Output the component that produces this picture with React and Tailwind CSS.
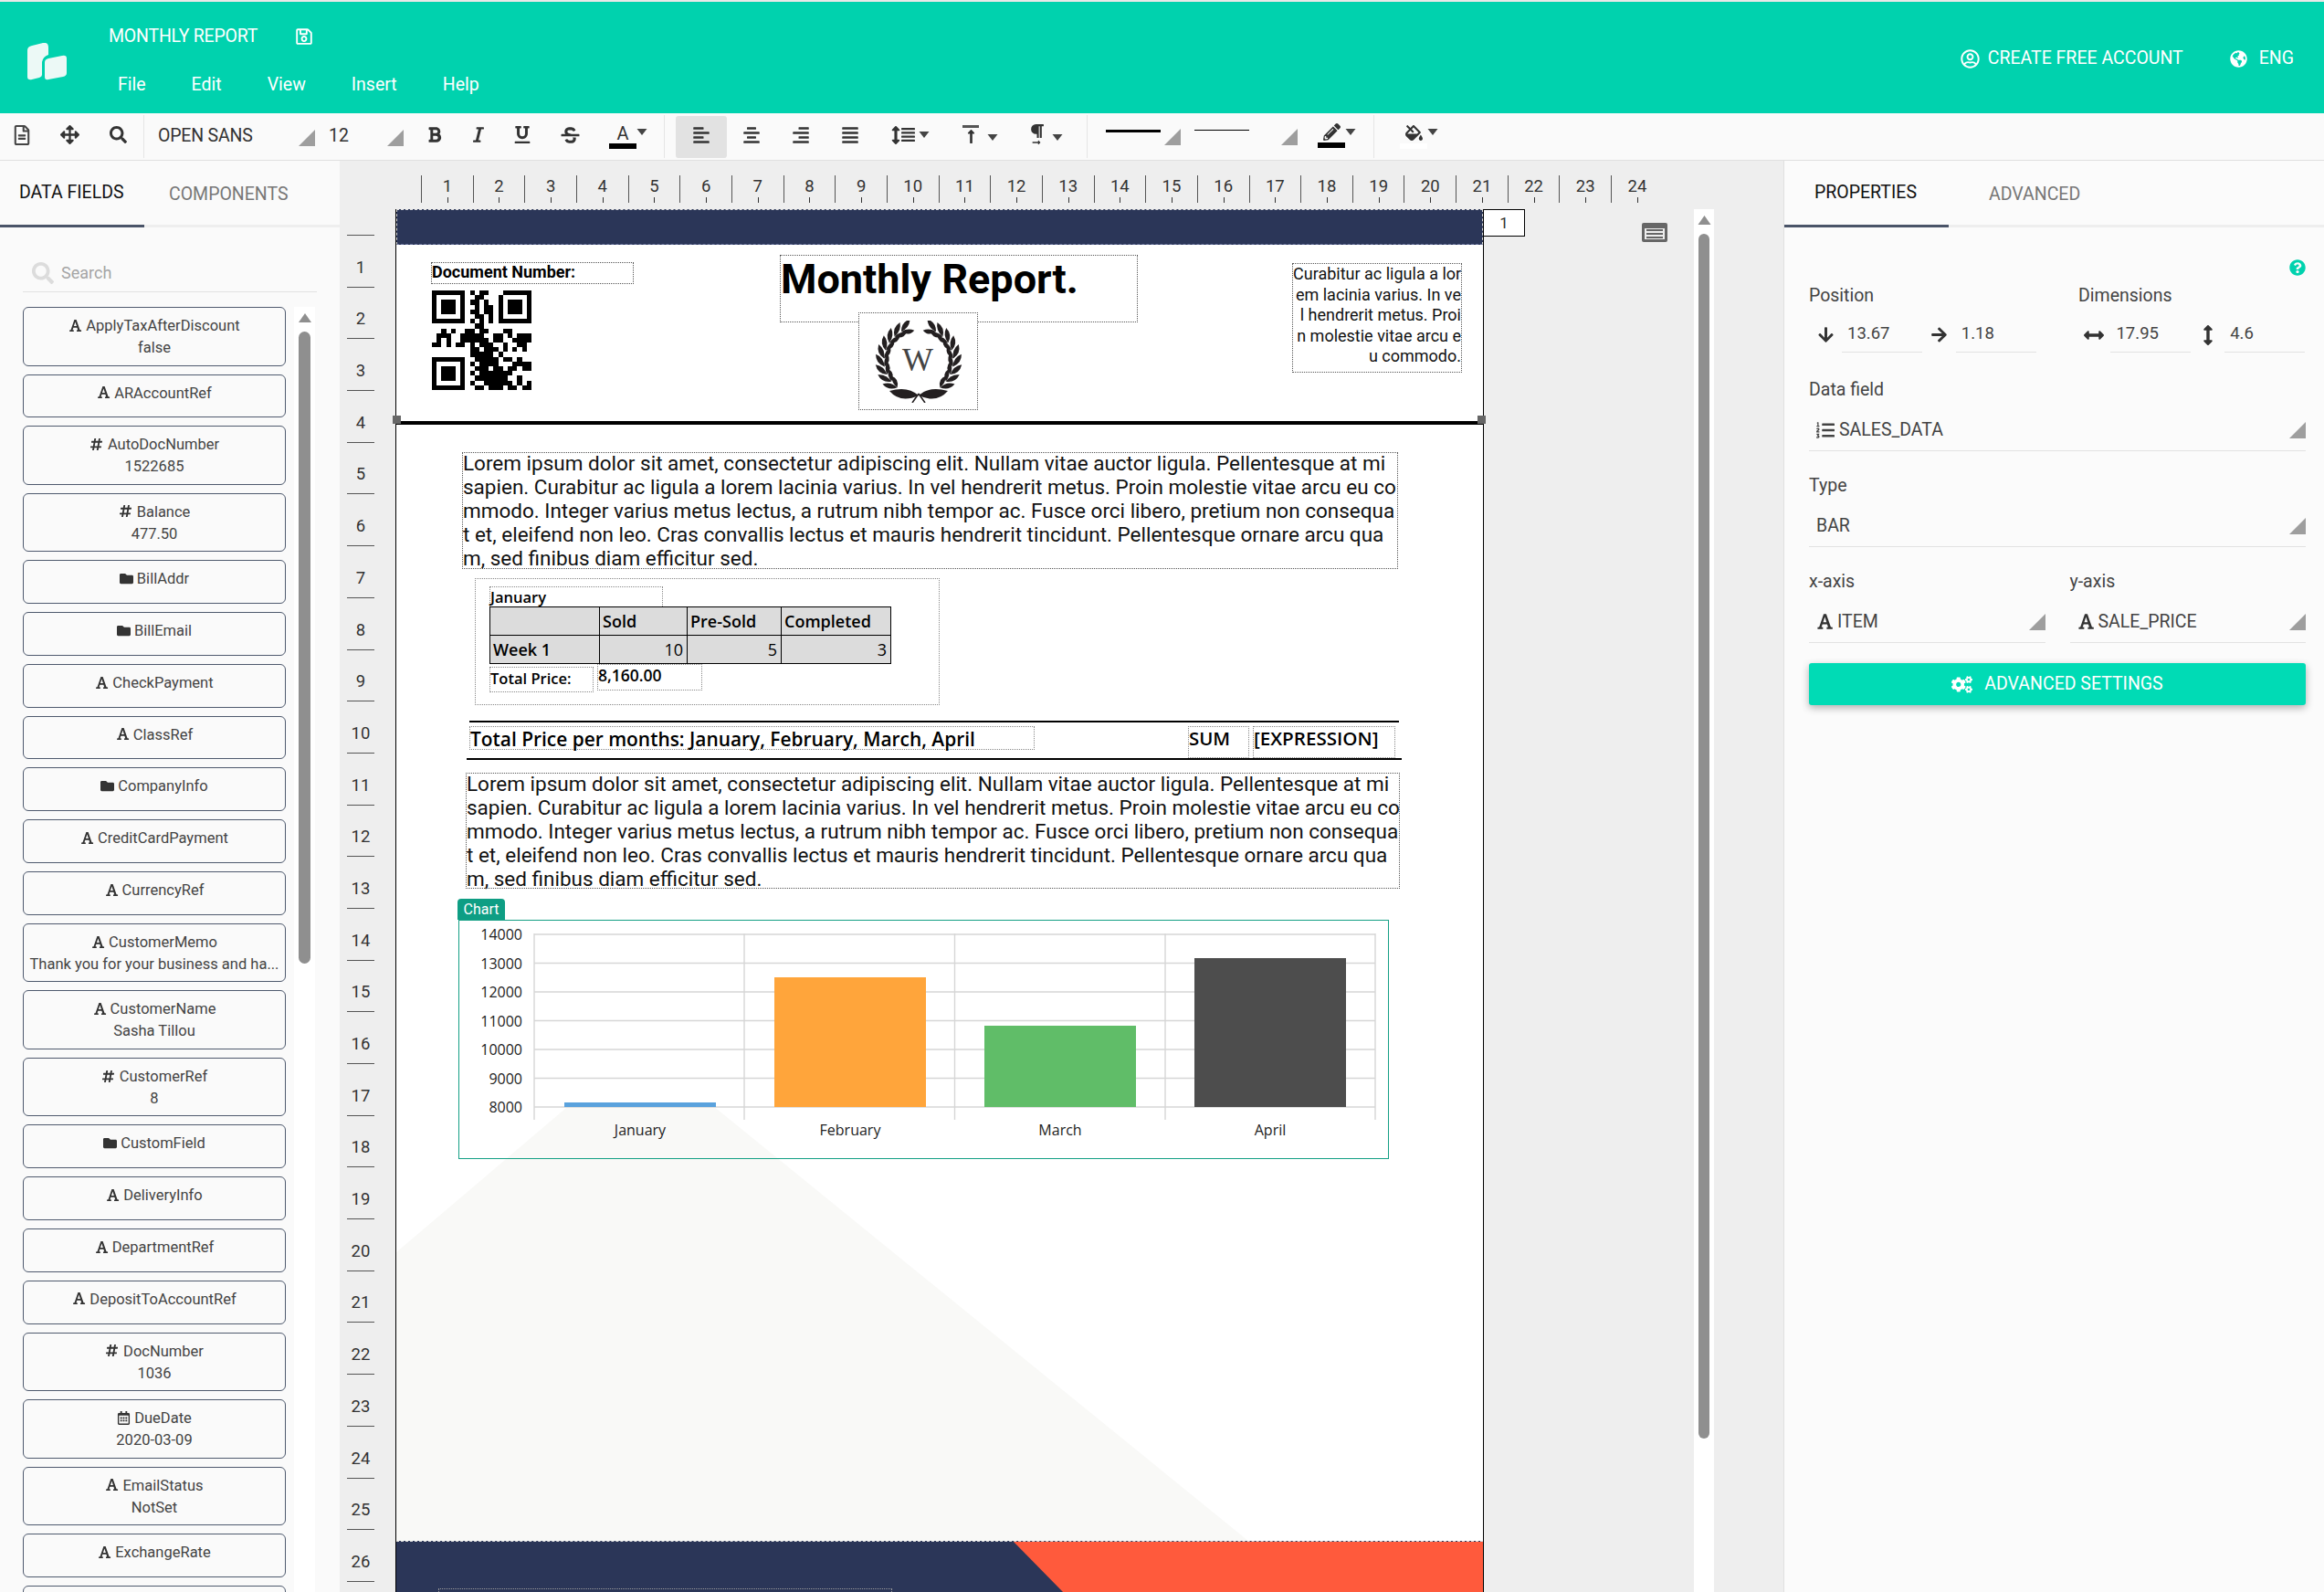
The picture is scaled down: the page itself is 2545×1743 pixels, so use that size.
import React from 'react';
import {
    FaRegFileAlt, FaArrowsAlt, FaSearch, FaBold, FaItalic, FaUnderline, FaStrikethrough,
    FaAlignLeft, FaAlignCenter, FaAlignRight, FaAlignJustify, FaHashtag, FaFolder,
    FaRegCalendarAlt, FaCogs, FaListOl, FaArrowDown, FaArrowRight, FaArrowsAltH, FaArrowsAltV,
    FaQuestionCircle, FaGlobeAmericas, FaRegSave, FaRegUserCircle, FaPencilAlt, FaFillDrip, FaParagraph,
    FaLongArrowAltUp, FaLongArrowAltRight,
} from 'react-icons/fa';

const fields = [
    ['font', 'ApplyTaxAfterDiscount', 'false'],
    ['font', 'ARAccountRef'],
    ['hash', 'AutoDocNumber', '1522685'],
    ['hash', 'Balance', '477.50'],
    ['folder', 'BillAddr'],
    ['folder', 'BillEmail'],
    ['font', 'CheckPayment'],
    ['font', 'ClassRef'],
    ['folder', 'CompanyInfo'],
    ['font', 'CreditCardPayment'],
    ['font', 'CurrencyRef'],
    ['font', 'CustomerMemo', 'Thank you for your business and ha...'],
    ['font', 'CustomerName', 'Sasha Tillou'],
    ['hash', 'CustomerRef', '8'],
    ['folder', 'CustomField'],
    ['font', 'DeliveryInfo'],
    ['font', 'DepartmentRef'],
    ['font', 'DepositToAccountRef'],
    ['hash', 'DocNumber', '1036'],
    ['date', 'DueDate', '2020-03-09'],
    ['font', 'EmailStatus', 'NotSet'],
    ['font', 'ExchangeRate'],
];

function FontGlyph({ className }) {
    return (
        <svg viewBox="0 0 16 16" className={className}>
            <path
                fillRule="evenodd"
                fill="#333"
                d="M6.8 1h2.4l4.2 12 1.6.3V15H9.6v-1.7l1.3-.2-.9-2.6H5.7l-.9 2.6 1.4.2V15H1.2v-1.7l1.5-.3z M6.3 8.6h3.2L7.9 3.8z"
            />
        </svg>
    );
}

const fieldIcons = {
    font: <FontGlyph className="inline-block size-[15px] mr-[4px] -mt-[3px]" />,
    hash: <FaHashtag className="inline-block size-[15px] mr-[5px] -mt-[3px] text-[#333]" />,
    folder: <FaFolder className="inline-block size-[15px] mr-[4px] -mt-[3px] text-[#333]" />,
    date: <FaRegCalendarAlt className="inline-block size-[15px] mr-[4px] -mt-[3px] text-[#333]" />,
};

const rulerNumbers = Array.from({ length: 24 }, (_, i) => i + 1);
const pageNumbers = Array.from({ length: 26 }, (_, i) => i + 1);

const lorem = [
    'Lorem ipsum dolor sit amet, consectetur adipiscing elit. Nullam vitae auctor ligula. Pellentesque at mi',
    'sapien. Curabitur ac ligula a lorem lacinia varius. In vel hendrerit metus. Proin molestie vitae arcu eu co',
    'mmodo. Integer varius metus lectus, a rutrum nibh tempor ac. Fusce orci libero, pretium non consequa',
    't et, eleifend non leo. Cras convallis lectus et mauris hendrerit tincidunt. Pellentesque ornare arcu qua',
    'm, sed finibus diam efficitur sed.',
];

const qrRows = [
    '111111101011000111111',
    '100000100110001000001',
    '101110101101001011101',
    '101110100101101011101',
    '101110101101101011101',
    '100000100110101000001',
    '111111101010101111111',
    '000000000110000000000',
    '001010011011000110000',
    '011100111110011010111',
    '010100111111011001111',
    '110101101011100100110',
    '000000001101110101010',
    '000000001111101000000',
    '111111100111110110100',
    '100000101011110001111',
    '101110100111011011011',
    '101110101011111110000',
    '101110100111111100100',
    '100000101001111110101',
    '111111100110111011011',
];

function Tri({ className }) {
    return (
        <svg viewBox="0 0 18 18" className={className}>
            <polygon points="18,0 18,18 0,18" fill="#9e9e9e" />
        </svg>
    );
}

function Caret({ className }) {
    return (
        <svg viewBox="0 0 11 7" className={`w-[12px] h-[7px] shrink-0 ${className}`}>
            <polygon points="0,0 11,0 5.5,7" fill="#444" />
        </svg>
    );
}

function Logo() {
    return (
        <svg viewBox="0 0 44 41" className="w-[44px] h-[41px] ml-[30px] mt-[45px] shrink-0">
            <path d="M0 8 Q0 4 5 3 L17 0 Q23 -1 23 5 L23 13 Q17 15 16 21 L16 35 Q16 37 13 38 L5 40 Q0 41 0 37 Z" fill="#ecf9f6" />
            <path d="M19 21 Q19 18 23 17 L38 14 Q43 13 43 17 L43 33 Q43 36 39 37 L23 40 Q19 41 19 37 Z" fill="#ecf9f6" />
        </svg>
    );
}

function Header() {
    return (
        <div className="h-[122px] bg-[#00d2ae] flex text-white shrink-0">
            <Logo />
            <div className="ml-[45px]">
                <div className="flex items-center mt-[26px] h-[24px]">
                    <span className="text-[19.5px] tracking-[-0.2px]">MONTHLY REPORT</span>
                    <FaRegSave className="ml-[41px] size-[20px]" />
                </div>
                <div className="flex text-[19.5px] mt-[29px] leading-[24px]">
                    <span className="ml-[10px]">File</span>
                    <span className="ml-[50px]">Edit</span>
                    <span className="ml-[50px]">View</span>
                    <span className="ml-[50px]">Insert</span>
                    <span className="ml-[50px]">Help</span>
                </div>
            </div>
            <div className="ml-auto flex items-center h-[124px] pr-[33px] text-[19.5px]">
                <FaRegUserCircle className="size-[21px]" />
                <span className="ml-[9px]">CREATE FREE ACCOUNT</span>
                <FaGlobeAmericas className="ml-[51px] size-[19px]" />
                <span className="ml-[13px]">ENG</span>
            </div>
        </div>
    );
}

function Toolbar() {
    return (
        <div className="h-[52px] bg-[#fafafa] border-b border-[#e0e0e0] flex items-stretch text-[#333] shrink-0">
            <div className="w-[158px] border-r border-[#e5e5e5] my-[2px] pb-[4px] flex items-center pl-[15px]">
                <FaRegFileAlt className="w-[18px] h-[22px] text-[#444]" />
                <FaArrowsAlt className="ml-[33px] size-[21px]" />
                <FaSearch className="ml-[33px] size-[19px]" />
            </div>
            <div className="w-[570px] border-r border-[#e5e5e5] my-[2px] pb-[4px] flex items-center">
                <span className="ml-[15px] w-[154px] text-[19.5px] tracking-[-0.2px] mt-[2px]">OPEN SANS</span>
                <Tri className="size-[18px] mt-[6px]" />
                <span className="ml-[15px] w-[64px] text-[19.5px] mt-[2px]">12</span>
                <Tri className="size-[18px] mt-[6px]" />
                <FaBold className="ml-[26px] w-[16px] h-[19px]" />
                <FaItalic className="ml-[34px] w-[12px] h-[19px]" />
                <FaUnderline className="ml-[33px] w-[18px] h-[19px]" />
                <FaStrikethrough className="ml-[33px] w-[21px] h-[20px]" />
                <div className="ml-[32px] w-[30px] flex flex-col items-center mt-[2px]">
                    <span className="text-[20px] leading-[22px]">A</span>
                    <span className="w-full h-[6px] bg-black"></span>
                </div>
                <Caret className="-mt-[6px]" />
            </div>
            <div className="w-[463px] border-r border-[#e5e5e5] my-[2px] flex items-center">
                <div className="ml-[12px] w-[56px] h-[46px] bg-[#e2e2e2] rounded-[3px] flex items-center justify-center pb-[4px]">
                    <FaAlignLeft className="size-[20px]" />
                </div>
                <div className="w-[54px] flex justify-center pb-[4px]"><FaAlignCenter className="size-[20px]" /></div>
                <div className="w-[54px] flex justify-center pb-[4px]"><FaAlignRight className="size-[20px]" /></div>
                <div className="w-[54px] flex justify-center pb-[4px]"><FaAlignJustify className="size-[20px]" /></div>
                <div className="ml-[18px] flex items-center pb-[4px]">
                    <FaArrowsAltV className="w-[10px] h-[22px]" />
                    <FaAlignJustify className="w-[17px] h-[17px]" />
                </div>
                <Caret className="ml-[3px] -mt-[4px]" />
                <div className="ml-[36px] w-[18px] flex flex-col items-center pb-[4px]">
                    <span className="w-[18px] h-[3px] bg-[#555]"></span>
                    <FaLongArrowAltUp className="size-[17px] mt-[1px]" />
                </div>
                <Caret className="ml-[9px] mt-[2px]" />
                <div className="ml-[33px] w-[18px] flex flex-col items-center pb-[4px]">
                    <FaParagraph className="size-[17px]" />
                    <FaLongArrowAltRight className="w-[18px] h-[10px] -mt-[1px]" />
                </div>
                <Caret className="ml-[8px] mt-[2px]" />
            </div>
            <div className="w-[314px] border-r border-[#e5e5e5] my-[2px] pb-[4px] flex items-center">
                <span className="ml-[20px] w-[60px] h-[3px] bg-black -mt-[8px]"></span>
                <Tri className="ml-[4px] size-[18px] mt-[4px]" />
                <span className="ml-[15px] w-[60px] h-[1px] bg-black -mt-[10px]"></span>
                <Tri className="ml-[35px] size-[18px] mt-[4px]" />
                <div className="ml-[22px] w-[30px] flex flex-col items-center mt-[2px]">
                    <FaPencilAlt className="size-[19px]" />
                    <span className="w-full h-[6px] bg-black mt-[2px]"></span>
                </div>
                <Caret className="-mt-[6px]" />
            </div>
            <div className="my-[2px] pb-[4px] flex items-center pl-[28px]">
                <div className="w-[30px] flex flex-col items-center mt-[3px]">
                    <FaFillDrip className="size-[19px]" />
                    <span className="w-full h-[6px] bg-white mt-[2px]"></span>
                </div>
                <Caret className="-mt-[6px]" />
            </div>
        </div>
    );
}

function TabBar({ active, other, activeWidth, left, otherLeft }) {
    return (
        <div className="h-[73px] border-b-[3px] border-[#eeeeee] relative flex items-end shrink-0">
            <div className={`${activeWidth} h-[70px] flex items-center -mb-[3px] border-b-[3px] border-[#4a5468] box-content pt-[2px]`}>
                <span className={`${left} text-[19.5px] text-[#111]`}>{active}</span>
            </div>
            <div className="h-[70px] flex items-center pt-[3px]">
                <span className={`${otherLeft} text-[19.5px] text-[#777]`}>{other}</span>
            </div>
        </div>
    );
}

function FieldItem({ kind, name, value }) {
    return (
        <div className={`${value ? 'h-[64.5px]' : 'h-[47.8px]'} shrink-0 border-[1.5px] border-[#4f5a6e] rounded-[6px] pt-[8px] text-center text-[16.5px] leading-[24px] text-[#444] whitespace-nowrap overflow-hidden`}>
            <div>{fieldIcons[kind]}{name}</div>
            {value && <div>{value}</div>}
        </div>
    );
}

function LeftPanel() {
    return (
        <div className="w-[372px] bg-[#fafafa] flex flex-col shrink-0 overflow-hidden">
            <TabBar active="DATA FIELDS" other="COMPONENTS" activeWidth="w-[158px]" left="ml-[21px]" otherLeft="ml-[27px]" />
            <div className="mx-[25px] mt-[33px] h-[38px] shrink-0 border-b border-[#e2e2e2] flex items-center pb-[4px]">
                <FaSearch className="ml-[10px] size-[24px] text-[#dcdcdc]" />
                <span className="ml-[8px] text-[18px] text-[#a5a5a5]">Search</span>
            </div>
            <div className="flex mt-[16px] pl-[25px] shrink-0">
                <div className="w-[288px] flex flex-col gap-[9px]">
                    {fields.map((f) => (
                        <FieldItem key={f[1]} kind={f[0]} name={f[1]} value={f[2]} />
                    ))}
                    <div className="h-[47.8px] shrink-0 border-[1.5px] border-[#4f5a6e] rounded-[6px]"></div>
                </div>
                <div className="ml-[9px] w-[23px] bg-white flex flex-col items-center h-[1500px]">
                    <svg viewBox="0 0 14 10" className="w-[14px] h-[10px] mt-[7px]"><polygon points="7,0 14,10 0,10" fill="#8f8f8f" /></svg>
                    <div className="w-[13px] h-[692px] mt-[10px] bg-[#8f8f8f] rounded-full"></div>
                </div>
            </div>
        </div>
    );
}

function HorizontalRuler() {
    return (
        <div className="h-[53px] pt-[16px] pl-[89px] flex shrink-0">
            {rulerNumbers.map((n) => (
                <div key={n} className="w-[56.66px] h-[30px] border-l border-[#555] relative text-center text-[18.5px] leading-[24px] text-[#333]">
                    {n}
                    <span className="absolute left-1/2 bottom-0 w-px h-[6px] bg-[#333]"></span>
                </div>
            ))}
        </div>
    );
}

function VerticalRuler() {
    return (
        <div className="w-[61px] pt-[28px] shrink-0 text-[#333]">
            <div className="ml-[8px] w-[30px] border-t border-[#555]"></div>
            {pageNumbers.map((n) => (
                <div key={n} className="ml-[8px] w-[30px] h-[56.7px] border-b border-[#555] flex items-end justify-center pb-[9px] text-[18.5px] leading-[24px]">
                    {n}
                </div>
            ))}
        </div>
    );
}

function QrCode() {
    return (
        <svg viewBox="0 0 21 21" className="size-full" shapeRendering="crispEdges">
            {qrRows.map((row, y) =>
                row.split('').map((c, x) => (c === '1' ? <rect key={`${x}-${y}`} x={x} y={y} width="1" height="1" fill="#000" /> : null))
            )}
        </svg>
    );
}

const wreathNodes = [-60, -46, -32, -18, -4, 10, 24, 38, 52];

function Branch() {
    return (
        <g>
            {wreathNodes.map((t) => {
                const a = (t * Math.PI) / 180;
                const x = 50 - 38 * Math.cos(a);
                const y = 44 + 37 * Math.sin(a);
                return (
                    <g key={t} transform={`translate(${x} ${y}) rotate(${-t})`}>
                        <path d="M0 0 Q-9 -5 -7 -15 Q1 -10 0 0Z" fill="#231f20" />
                        <path d="M0 0 Q0 -8 6 -13 Q9 -4 0 0Z" fill="#231f20" />
                    </g>
                );
            })}
        </g>
    );
}

function Wreath() {
    return (
        <svg viewBox="0 0 100 90" className="w-[100px] h-[90px]">
            <Branch />
            <g transform="matrix(-1 0 0 1 100 0)"><Branch /></g>
            <path d="M50 82 Q38 71 18 77 Q30 91 50 82Z" fill="#231f20" />
            <path d="M50 82 Q62 71 82 77 Q70 91 50 82Z" fill="#231f20" />
            <path d="M50 80 L43 90 M50 80 L57 90" stroke="#231f20" strokeWidth="1.6" />
        </svg>
    );
}

function Chart() {
    const ticks = [
        ['14000', 15], ['13000', 46.5], ['12000', 78], ['11000', 109.5],
        ['10000', 141], ['9000', 172.5], ['8000', 204],
    ];
    const bars = [
        ['January', 115, 199, '#5aa2dd'],
        ['February', 345, 62, '#ffa53b'],
        ['March', 575, 115, '#60bd68'],
        ['April', 805, 41, '#4d4d4d'],
    ];
    return (
        <svg viewBox="0 0 1017 260" className="w-full h-full font-['Open_Sans',sans-serif]">
            <rect x="0" y="0" width="1017" height="204" fill="#fff" />
            {ticks.map(([label, y]) => (
                <g key={label}>
                    <line x1="82" x2="1003" y1={y} y2={y} stroke="#d6d6d6" strokeWidth="1.6" />
                    <text x="69" y={y + 6} textAnchor="end" fontSize="16" fill="#222">{label}</text>
                </g>
            ))}
            {[82, 312, 542.5, 773, 1003].map((x) => (
                <line key={x} x1={x} x2={x} y1="14" y2="218" stroke="#d6d6d6" strokeWidth="1.4" />
            ))}
            {bars.map(([label, x, y, color]) => (
                <g key={label}>
                    <rect x={x} y={y} width="166" height={204 - y} fill={color} />
                    <text x={x + 83} y="235" textAnchor="middle" fontSize="16" fill="#222">{label}</text>
                </g>
            ))}
        </svg>
    );
}

function ReportPage() {
    return (
        <div className="w-[1192px] h-[1514px] shrink-0 relative bg-white border-x border-black font-[Roboto,sans-serif] text-black">
            <svg viewBox="0 0 1190 1458" className="absolute left-0 top-0 w-[1190px] h-[1458px]">
                <polygon points="266,916 933,1458 0,1458 0,1142" fill="#f9f9f7" />
            </svg>

            <div className="absolute left-0 top-0 w-full h-[39px] bg-[#2b3658] border border-dashed border-[#dddddd] border-b-[#65709a]"></div>

            <div className="absolute left-[38px] top-[58px] w-[222px] h-[24px] border border-dotted border-[#555] text-[18px] font-bold leading-[20px] whitespace-nowrap">Document Number:</div>
            <div className="absolute left-[39px] top-[89px] size-[109px]"><QrCode /></div>

            <div className="absolute left-[420px] top-[50px] w-[392px] h-[74px] border border-dotted border-[#555] text-[45px] font-bold leading-[44px] pt-[4px] whitespace-nowrap">Monthly Report.</div>
            <div className="absolute left-[506px] top-[113px] w-[131px] h-[107px] bg-white border border-dotted border-[#555] flex items-center justify-center">
                <Wreath />
                <span className="absolute left-[47px] top-[31px] text-[36px] leading-[40px] text-[#444] font-['Liberation_Serif',serif]">W</span>
            </div>

            <div className="absolute left-[981px] top-[59px] w-[186px] h-[120px] border border-dotted border-[#555] text-right text-[18px] leading-[22.6px] text-[#111] whitespace-nowrap">
                <div>Curabitur ac ligula a lor</div>
                <div>em lacinia varius. In ve</div>
                <div>l hendrerit metus. Proi</div>
                <div>n molestie vitae arcu e</div>
                <div>u commodo.</div>
            </div>

            <div className="absolute left-0 top-[232px] w-full h-[4px] bg-black"></div>
            <div className="absolute -left-[4px] top-[226px] w-[9px] h-[9px] bg-[#666]"></div>
            <div className="absolute left-[1184px] top-[226px] w-[9px] h-[9px] bg-[#666]"></div>

            <div className="absolute left-[72px] top-[266px] w-[1025px] h-[128px] border border-dotted border-[#555] text-[22.5px] leading-[26px] whitespace-nowrap text-[#111]">
                <div className="-mt-[2px]">{lorem.map((l) => <div key={l}>{l}</div>)}</div>
            </div>

            <div className="font-['Open_Sans',sans-serif]">
                <div className="absolute left-[86px] top-[404px] w-[509px] h-[139px] border border-dotted border-[#888]"></div>
                <div className="absolute left-[102px] top-[413px] w-[190px] h-[30px] border border-dotted border-[#888] text-[16.5px] font-semibold leading-[22px]">January</div>
                <table className="absolute left-[102px] top-[435px] w-[440px] h-[62px] border-collapse border-[1.5px] border-black bg-[#dcdcdc] text-[18px] table-fixed">
                    <tbody>
                        <tr className="h-[31px]">
                            <td className="w-[120px] border border-black"></td>
                            <td className="w-[96px] border border-black font-semibold px-[3px]">Sold</td>
                            <td className="w-[103px] border border-black font-semibold px-[3px]">Pre-Sold</td>
                            <td className="border border-black font-semibold px-[3px]">Completed</td>
                        </tr>
                        <tr className="h-[31px]">
                            <td className="border border-black font-semibold px-[3px]">Week 1</td>
                            <td className="border border-black text-right px-[4px]">10</td>
                            <td className="border border-black text-right px-[4px]">5</td>
                            <td className="border border-black text-right px-[4px]">3</td>
                        </tr>
                    </tbody>
                </table>
                <div className="absolute left-[102px] top-[501px] w-[114px] h-[28px] border border-dotted border-[#888] text-[16.5px] font-semibold leading-[24px]">Total Price:</div>
                <div className="absolute left-[220px] top-[498px] w-[115px] h-[29px] border border-dotted border-[#888] text-[17.5px] font-semibold leading-[22px]">8,160.00</div>

                <div className="absolute left-[80px] top-[560px] w-[1018px] h-[1.5px] bg-black"></div>
                <div className="absolute left-[77px] top-[601px] w-[1024px] h-[1.5px] bg-black"></div>
                <div className="absolute left-[80px] top-[566px] w-[619px] h-[26px] border border-dotted border-[#888] text-[20.9px] font-semibold leading-[26px] whitespace-nowrap">Total Price per months: January, February, March, April</div>
                <div className="absolute left-[867px] top-[566px] w-[67px] h-[35px] border border-dotted border-[#888] text-[20.4px] font-semibold leading-[24px]">SUM</div>
                <div className="absolute left-[938px] top-[566px] w-[156px] h-[35px] border border-dotted border-[#888] text-[20.6px] font-semibold leading-[24px] whitespace-nowrap">[EXPRESSION]</div>
            </div>

            <div className="absolute left-[76px] top-[617px] w-[1023px] h-[127px] border border-dotted border-[#555] text-[22.5px] leading-[26px] whitespace-nowrap text-[#111]">
                <div className="-mt-[2px]">{lorem.map((l) => <div key={l}>{l}</div>)}</div>
            </div>

            <div className="absolute left-[67px] top-[755px] w-[52px] h-[23px] rounded-t-[4px] bg-[#0e9e84] text-white text-[16px] leading-[24px] text-center">Chart</div>
            <div className="absolute left-[68px] top-[778px] w-[1019px] h-[262px] border border-[#14a085]">
                <Chart />
            </div>

            <div className="absolute left-0 top-[1458px] w-full h-[56px] overflow-hidden bg-[#2b3658] border-t border-dashed border-[#dddddd]">
                <svg viewBox="0 0 1190 56" className="absolute left-0 top-0 w-[1190px] h-[56px]">
                    <polygon points="676,0 1190,0 1190,56 731,56" fill="#ff5a3c" />
                </svg>
                <div className="absolute left-[46px] top-[51px] w-[497px] h-[40px] border border-dotted border-[#999]"></div>
            </div>
        </div>
    );
}

function PagePane() {
    return (
        <div className="flex-1 flex min-w-0">
            <div className="w-[45px] h-[30px] bg-white border border-l-0 border-black text-center text-[17px] leading-[28px] text-[#333] shrink-0">1</div>
            <div className="ml-[128px] mt-[15px] w-[28px] h-[21px] rounded-[2px] bg-[#666] p-[3px] pt-[6px] shrink-0">
                <div className="w-full h-full bg-[#eee] flex flex-col justify-around px-[2px]">
                    <span className="h-[2px] bg-[#666]"></span>
                    <span className="h-[2px] bg-[#666]"></span>
                    <span className="h-[2px] bg-[#666]"></span>
                </div>
            </div>
            <div className="ml-[29px] w-[22px] bg-white flex flex-col items-center shrink-0">
                <svg viewBox="0 0 14 10" className="w-[15px] h-[10px] mt-[7px]"><polygon points="7,0 14,10 0,10" fill="#8f8f8f" /></svg>
                <div className="w-[12px] h-[1319px] mt-[10px] bg-[#8f8f8f] rounded-full"></div>
            </div>
        </div>
    );
}

function Canvas() {
    return (
        <div className="flex-1 min-w-0 bg-[#eeeeee] flex flex-col overflow-hidden">
            <HorizontalRuler />
            <div className="flex flex-1 min-h-0">
                <VerticalRuler />
                <ReportPage />
                <PagePane />
            </div>
        </div>
    );
}

function ValueField({ icon, value }) {
    return (
        <div className="flex items-center w-[125px]">
            <div className="w-[36px] flex justify-center text-[#333] shrink-0">{icon}</div>
            <div className="w-[88px] h-[39px] border-b border-[#e2e2e2] text-[18.5px] leading-[36px] text-[#444] pl-[6px]">{value}</div>
        </div>
    );
}

function SelectField({ icon, value }) {
    return (
        <div className="mt-[15px] h-[40px] border-b border-[#e2e2e2] flex items-center pl-[8px] pb-[6px] text-[19.5px] text-[#444]">
            {icon}
            <span>{value}</span>
            <Tri className="size-[18px] ml-auto" />
        </div>
    );
}

function RightPanel() {
    return (
        <div className="w-[592px] bg-[#fbfbfb] border-l border-[#e0e0e0] flex flex-col shrink-0">
            <TabBar active="PROPERTIES" other="ADVANCED" activeWidth="w-[180px]" left="ml-[33px]" otherLeft="ml-[44px]" />
            <div className="pl-[27px] pr-[20px] text-[19.5px] text-[#444]">
                <div className="flex justify-end mt-[35px] h-[18px]">
                    <FaQuestionCircle className="size-[18px] text-[#00d2ae]" />
                </div>
                <div className="flex mt-[10px] leading-[24px]">
                    <span className="w-[295px]">Position</span>
                    <span>Dimensions</span>
                </div>
                <div className="flex mt-[11px]">
                    <ValueField icon={<FaArrowDown className="size-[19px]" />} value="13.67" />
                    <ValueField icon={<FaArrowRight className="size-[19px]" />} value="1.18" />
                    <div className="w-[45px]"></div>
                    <ValueField icon={<FaArrowsAltH className="size-[22px]" />} value="17.95" />
                    <ValueField icon={<FaArrowsAltV className="size-[22px]" />} value="4.6" />
                </div>
                <div className="mt-[29px] leading-[24px]">Data field</div>
                <SelectField icon={<FaListOl className="size-[20px] mr-[5px]" />} value="SALES_DATA" />
                <div className="mt-[26px] leading-[24px]">Type</div>
                <SelectField value="BAR" />
                <div className="flex gap-[27px] mt-[26px]">
                    <div className="flex-1">
                        <div className="leading-[24px]">x-axis</div>
                        <SelectField icon={<FontGlyph className="size-[19px] mr-[4px]" />} value="ITEM" />
                    </div>
                    <div className="flex-1">
                        <div className="leading-[24px]">y-axis</div>
                        <SelectField icon={<FontGlyph className="size-[19px] mr-[4px]" />} value="SALE_PRICE" />
                    </div>
                </div>
                <button className="mt-[22px] w-full h-[46px] bg-[#00dbb5] rounded-[3px] text-white text-[19.5px] flex items-center justify-center shadow-[0_3px_8px_rgba(0,0,0,0.3)]">
                    <FaCogs className="size-[23px] mr-[13px]" />
                    ADVANCED SETTINGS
                </button>
            </div>
        </div>
    );
}

export default function App() {
    return (
        <div className="w-[2545px] h-[1743px] overflow-hidden flex flex-col bg-[#e8e8e8] pt-[2px] font-[Roboto,sans-serif]">
            <Header />
            <Toolbar />
            <div className="flex flex-1 min-h-0">
                <LeftPanel />
                <Canvas />
                <RightPanel />
            </div>
        </div>
    );
}
